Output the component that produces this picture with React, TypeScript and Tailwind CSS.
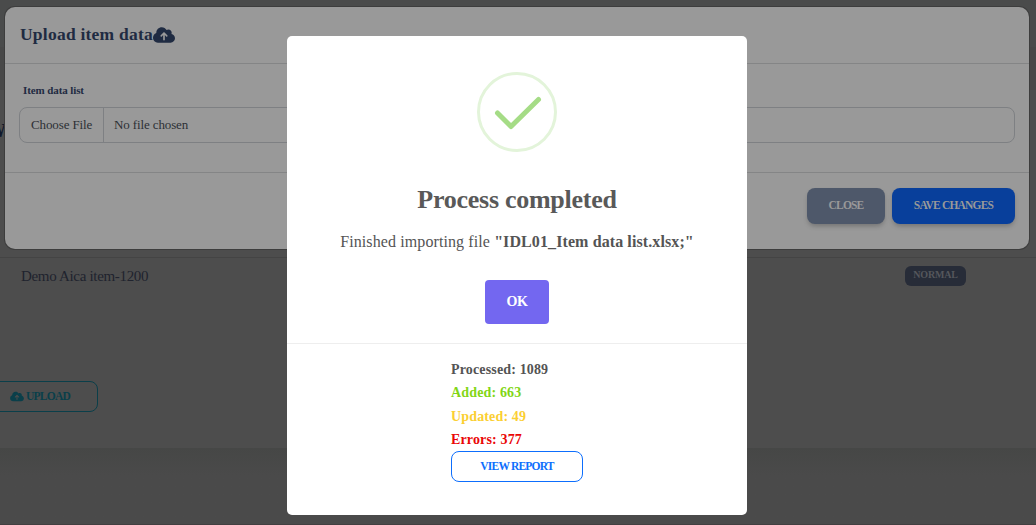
import { FaCloudArrowUp } from "react-icons/fa6";

function PageBehind() {
  return (
    <div className="flex h-[525px] flex-col overflow-hidden bg-[#4d4d4d]">
      <div className="h-[47px] shrink-0 bg-[#4a4b4b]" />
      <div className="h-[43px] shrink-0 bg-[#484848]" />
      <div className="h-[114px] shrink-0 pt-[30px]">
        <div className="-ml-[12px] text-[18px] leading-[23px] font-bold text-[#11192c]">W</div>
      </div>
      <div className="flex h-[96px] shrink-0 items-start pt-[53px]">
        <div className="flex h-[43px] w-full items-start border-t border-[#444444] pt-[8px]">
          <span className="w-[884px] pl-[21px] text-[15px] leading-[20px] tracking-[-0.32px] text-[#20232e]">Demo Aica item-1200</span>
          <span className="ml-[21px] flex h-5 w-[61px] items-center justify-center rounded-[6px] bg-[#272c38] pb-[3px] text-[10px] leading-none font-bold tracking-[-0.2px] text-[#55575c]">NORMAL</span>
        </div>
      </div>
      <div className="h-[148px] shrink-0 pt-[81px]">
        <div className="-ml-5 flex h-[31px] w-[118px] items-center rounded-[8px] border border-[#0a3f4a] pl-[29px] text-[#0a3f4a]">
          <FaCloudArrowUp className="h-[11px] w-[14px]" />
          <span className="ml-[2px] text-[11.5px] font-bold tracking-[-0.75px]">UPLOAD</span>
        </div>
      </div>
      <div className="flex-1 border-b border-[#423f40] bg-linear-to-b from-[#464746] to-[#4a4a4a] to-[28px]" />
    </div>
  );
}

function UploadDialog() {
  return (
    <div className="absolute top-[7px] left-[5px] flex h-[242px] w-[1024px] flex-col rounded-[10px] bg-[#999999] shadow-[0_0_0_1px_#3d3d3d]">
      <header className="flex h-[57px] items-center border-b border-[#848586] pl-[15px] text-[17.5px] leading-none font-bold text-[#1f2b42]">
        <span className="tracking-[0.23px]">Upload item data</span>
        <FaCloudArrowUp className="h-[18px] w-[22px]" />
      </header>
      <div className="h-[109px] border-b border-[#848586] px-[14px] pt-[19px]">
        <label className="block pl-1 text-[11px] leading-[14px] font-bold tracking-[-0.1px] text-[#1f2b42]">Item data list</label>
        <div className="mt-[10px] flex h-[36px] items-stretch rounded-[8px] border border-[#7e8083] text-[13px] leading-[34px] tracking-[-0.12px] text-[#2c3035]">
          <span className="w-[84px] border-r border-[#7e8083] pl-[11px]">Choose File</span>
          <span className="pl-[10px]">No file chosen</span>
        </div>
      </div>
      <footer className="flex gap-[7px] pt-[15px] pr-[14px] text-[11.5px] font-bold text-[#999999]">
        <button className="ml-auto h-[36px] w-[78px] rounded-[8px] bg-[#4e586a] tracking-[-0.8px] shadow-[0_3px_5px_-1px_#00000040]">CLOSE</button>
        <button className="h-[36px] w-[123px] rounded-[8px] bg-[#083f9b] tracking-[-0.8px] shadow-[0_3px_5px_-1px_#00000040]">SAVE CHANGES</button>
      </footer>
    </div>
  );
}

function ResultDialog() {
  return (
    <div className="absolute top-[36px] left-[287px] flex h-[479px] w-[460px] flex-col items-center rounded-[5px] bg-white text-[#545454]">
      <svg className="mt-[36px] size-20 shrink-0" viewBox="0 0 80 80" fill="none">
        <circle cx="40" cy="40" r="38.5" stroke="#e3f4da" strokeWidth="3" />
        <path d="M20.5 41L34 54.5L61.500 27.500" stroke="#a5dc86" strokeWidth="5" strokeLinecap="round" strokeLinejoin="round" />
      </svg>
      <h2 className="mt-[32px] text-[26px] leading-[32px] font-bold tracking-[-0.27px] text-[#595959]">Process completed</h2>
      <p className="mt-[16px] text-[16px] leading-[20px] tracking-[0.1px]">
        Finished importing file <b>"IDL01_Item data list.xlsx;"</b>
      </p>
      <button className="mt-[28px] h-[44px] w-[64px] rounded-[4px] bg-[#7367f0] pb-[2px] text-[14px] font-bold tracking-[-0.4px] text-white">OK</button>
      <div className="mt-[19px] flex w-full justify-center border-t border-[#eeeeee] pt-[14px]">
        <div className="w-[132px] text-[14px] leading-[23.4px] font-bold">
          <div className="tracking-[0.15px]">Processed: 1089</div>
          <div className="tracking-[0.15px] text-[#82d616]">Added: 663</div>
          <div className="tracking-[0.15px] text-[#fbcf33]">Updated: 49</div>
          <div className="tracking-[0.15px] text-[#ea0606]">Errors: 377</div>
          <button className="-mt-px block h-[31px] w-[132px] rounded-[8px] border border-[#0d6efd] pt-[2px] text-[11.5px] leading-none tracking-[-0.8px] text-[#0d6efd]">VIEW REPORT</button>
        </div>
      </div>
    </div>
  );
}

export default function App() {
  return (
    <main className="relative h-[525px] w-[1036px] overflow-hidden font-['Liberation_Serif',serif]">
      <PageBehind />
      <UploadDialog />
      <ResultDialog />
    </main>
  );
}
